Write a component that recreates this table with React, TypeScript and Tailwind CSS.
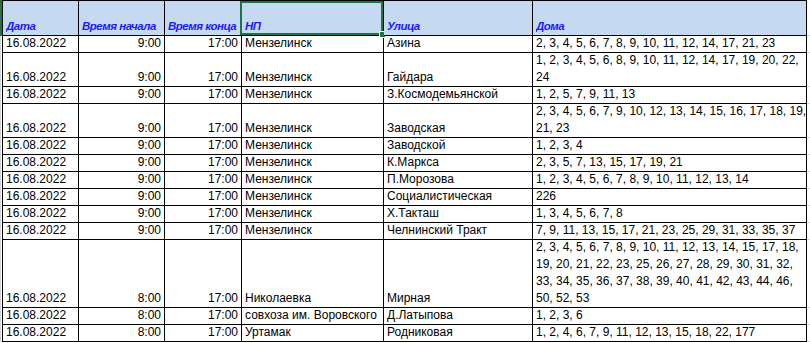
import { clsx } from "clsx";

interface Row {
  start: string;
  place: string;
  street: string;
  houses: string[];
}

const rows: Row[] = [
  { start: "9:00", place: "Мензелинск", street: "Азина", houses: ["2, 3, 4, 5, 6, 7, 8, 9, 10, 11, 12, 14, 17, 21, 23"] },
  { start: "9:00", place: "Мензелинск", street: "Гайдара", houses: ["1, 2, 3, 4, 5, 6, 8, 9, 10, 11, 12, 14, 17, 19, 20, 22,", "24"] },
  { start: "9:00", place: "Мензелинск", street: "З.Космодемьянской", houses: ["1, 2, 5, 7, 9, 11, 13"] },
  { start: "9:00", place: "Мензелинск", street: "Заводская", houses: ["2, 3, 4, 5, 6, 7, 9, 10, 12, 13, 14, 15, 16, 17, 18, 19,", "21, 23"] },
  { start: "9:00", place: "Мензелинск", street: "Заводской", houses: ["1, 2, 3, 4"] },
  { start: "9:00", place: "Мензелинск", street: "К.Маркса", houses: ["2, 3, 5, 7, 13, 15, 17, 19, 21"] },
  { start: "9:00", place: "Мензелинск", street: "П.Морозова", houses: ["1, 2, 3, 4, 5, 6, 7, 8, 9, 10, 11, 12, 13, 14"] },
  { start: "9:00", place: "Мензелинск", street: "Социалистическая", houses: ["226"] },
  { start: "9:00", place: "Мензелинск", street: "Х.Такташ", houses: ["1, 3, 4, 5, 6, 7, 8"] },
  { start: "9:00", place: "Мензелинск", street: "Челнинский Тракт", houses: ["7, 9, 11, 13, 15, 17, 21, 23, 25, 29, 31, 33, 35, 37"] },
  {
    start: "8:00",
    place: "Николаевка",
    street: "Мирная",
    houses: [
      "2, 3, 4, 5, 6, 7, 8, 9, 10, 11, 12, 13, 14, 15, 17, 18,",
      "19, 20, 21, 22, 23, 25, 26, 27, 28, 29, 30, 31, 32,",
      "33, 34, 35, 36, 37, 38, 39, 40, 41, 42, 43, 44, 46,",
      "50, 52, 53",
    ],
  },
  { start: "8:00", place: "совхоза им. Воровского", street: "Д.Латыпова", houses: ["1, 2, 3, 6"] },
  { start: "8:00", place: "Уртамак", street: "Родниковая", houses: ["1, 2, 4, 6, 7, 9, 11, 12, 13, 15, 18, 22, 177"] },
];

const widths = ["w-[77px]", "w-[86px]", "w-[77px]", "w-[142px]", "w-[149px]", "w-[274px]"];
const headers = ["Дата", "Время начала", "Время конца", "НП", "Улица", "Дома"];

const cell = "flex flex-col justify-end overflow-hidden whitespace-nowrap px-[3px] leading-[17px] border-r border-black shrink-0";

export default function App() {
  return (
    <div className="w-[810px] h-[343px] bg-white text-[12px] text-black overflow-hidden" style={{ fontFamily: '"Liberation Sans", Arial, sans-serif' }}>
      <div className="flex h-[36px]">
        <div className="w-[2px] bg-[#217346] shrink-0" />
        {headers.map((h, i) => (
          <div
            key={h}
            className={clsx(
              cell,
              widths[i],
              "relative overflow-visible border-t border-b bg-[#c5d9f1] font-bold italic text-[#1c1cf5] text-[11.5px] tracking-[-0.5px]",
              i === 0 && "border-l"
            )}
          >
            <span className="block overflow-hidden">{h}</span>
            {h === "НП" && (
              <div className="absolute -left-[2px] top-0 right-0 bottom-0 border-2 border-[#217346]">
                <div className="absolute -right-[5px] -bottom-[5px] w-[7px] h-[7px] bg-[#217346] border border-white" />
              </div>
            )}
          </div>
        ))}
        <div className="w-[3px] border-b border-[#d9d9d9] shrink-0" />
      </div>

      {rows.map((r, idx) => (
        <div
          key={idx}
          className={clsx(
            "flex",
            r.houses.length === 1 && "h-[17px]",
            r.houses.length === 2 && "h-[34px]",
            r.houses.length === 4 && "h-[68px]"
          )}
        >
          <div className="w-[2px] border-l border-[#d4d4d4] shrink-0" />
          <div className={clsx(cell, widths[0], "border-l border-b")}>16.08.2022</div>
          <div className={clsx(cell, widths[1], "border-b items-end")}>{r.start}</div>
          <div className={clsx(cell, widths[2], "border-b items-end")}>17:00</div>
          <div className={clsx(cell, widths[3], "border-b")}>{r.place}</div>
          <div className={clsx(cell, widths[4], "border-b")}>{r.street}</div>
          <div className={clsx(cell, widths[5], "border-b")}>
            {r.houses.map((line) => (
              <span key={line} className="block">
                {line}
              </span>
            ))}
          </div>
          <div className="w-[3px] border-b border-[#d9d9d9] shrink-0" />
        </div>
      ))}
    </div>
  );
}
